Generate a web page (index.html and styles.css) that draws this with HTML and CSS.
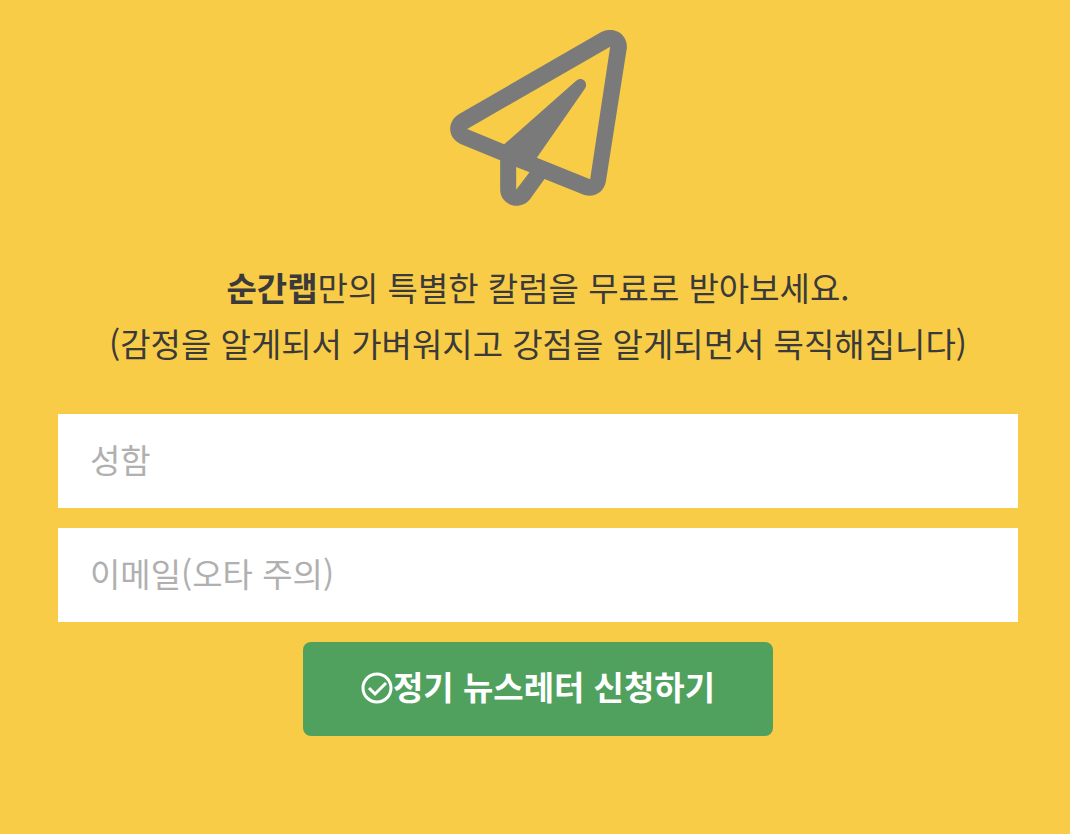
FILE: index.html
```html
<!DOCTYPE html>
<html lang="ko">
<head>
    <meta charset="UTF-8">
    <meta name="viewport" content="width=device-width, initial-scale=1.0">
    <title>뉴스레터 신청</title>
    <link rel="stylesheet" href="styles.css">
</head>
<body>
    <main class="newsletter">
        <svg class="plane" viewBox="60 60 530 528" aria-hidden="true">
            <path fill-rule="evenodd" d="M512 67C550 46 593 72 590 114L527 515C521 549 487 566 455 552L343 507L300 567C272 604 210 588 210 538V451L91 402C52 384 49 335 87 312ZM540 110L111 357L222 403L438 212C455 198 475 216 465 235L320 443L480 508ZM258 471V539L298 487Z"/>
        </svg>
        <p class="intro">
            <strong>순간랩</strong>만의 특별한 칼럼을 무료로 받아보세요.<br>
            (감정을 알게되서 가벼워지고 강점을 알게되면서 묵직해집니다)
        </p>
        <form class="form">
            <input type="text" class="field" aria-label="성함" placeholder="성함">
            <input type="email" class="field" aria-label="이메일" placeholder="이메일(오타 주의)">
            <button type="submit" class="btn">
                <svg class="check" viewBox="0 0 32 32" aria-hidden="true">
                    <circle cx="16" cy="16" r="14"/>
                    <path d="M8 16l6 6L25 11"/>
                </svg>
                <span class="btn_text">정기 뉴스레터 신청하기</span>
            </button>
        </form>
    </main>
</body>
</html>
```
FILE: styles.css
```css
* {
    margin: 0;
    padding: 0;
    box-sizing: border-box;
}
body {
    background-color: #f8cc47;
    font-family: "Noto Sans CJK KR", sans-serif;
    font-size: 33px;
    color: #3a3a3a;
}
.newsletter {
    display: flex;
    flex-direction: column;
    align-items: center;
    padding: 30px 52px 98px 58px;
}
.plane {
    width: 177px;
    height: 176px;
    fill: #7a7a7a;
}
.intro {
    margin: 53px 0 43px;
    line-height: 56px;
    text-align: center;
}
.form {
    display: flex;
    flex-direction: column;
    align-items: center;
    gap: 20px;
    width: 100%;
}
.field {
    width: 100%;
    height: 94px;
    padding: 0 32px 4px;
    border: none;
    background-color: #fff;
    color: #3a3a3a;
    font-family: inherit;
    font-size: 33px;
}
.field::placeholder {
    color: #b0b0b0;
}
.btn {
    display: flex;
    align-items: center;
    height: 94px;
    padding: 0 58px 2px;
    border: none;
    border-radius: 8px;
    background-color: #50a15e;
    color: #fff;
    font-family: inherit;
    font-size: 33px;
    font-weight: 700;
    cursor: pointer;
}
.btn_text {
    padding-bottom: 4px;
}
.check {
    width: 32px;
    height: 32px;
    fill: none;
    stroke: #fff;
    stroke-width: 3;
}
```
